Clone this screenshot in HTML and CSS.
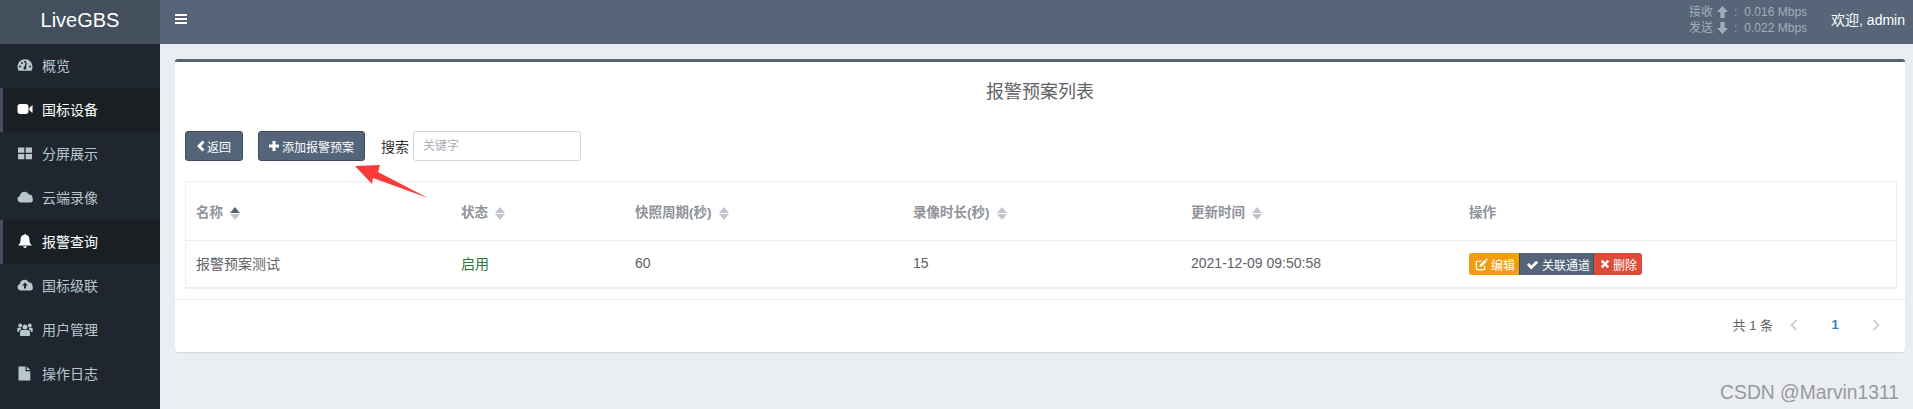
FILE: index.html
```html
<!DOCTYPE html>
<html lang="zh-CN">
<head>
<meta charset="utf-8">
<title>LiveGBS</title>
<link rel="stylesheet" href="styles.css">
</head>
<body>
<aside class="sidebar">
  <div class="logo">LiveGBS</div>
  <nav class="menu">
    <a class="item"><svg class="ico" viewBox="0 0 16 16"><path fill-rule="evenodd" d="M8 2.200C3.800 2.200.5 5.600.5 9.800c0 1.300.3 2.500.9 3.600.1.200.3.300.5.300h12.200c.2 0 .4-.1.500-.3.600-1.100.9-2.300.9-3.600 0-4.200-3.300-7.600-7.500-7.600zM3 10.500a1 1 0 1 1 0-2 1 1 0 0 1 0 2zm2-3.500a1 1 0 1 1 0-2 1 1 0 0 1 0 2zm3-1.300a1 1 0 1 1 0-2 1 1 0 0 1 0 2zm0 6.800c-.9 0-1.500-.7-1.500-1.500 0-.6.300-1.100.800-1.300l1.700-4.400 1 .3-1 4.500c.3.300.5.600.5 1 0 .8-.6 1.400-1.500 1.400zm5-2a1 1 0 1 1 0-2 1 1 0 0 1 0 2z"/></svg>概览</a>
    <a class="item active"><svg class="ico" viewBox="0 0 16 16"><path d="M.5 5.500C.5 4.100 1.600 3 3 3h6c1.400 0 2.500 1.100 2.500 2.500v5C11.500 11.900 10.400 13 9 13H3C1.600 13 .5 11.900.5 10.500zM12.300 7l2.800-2.800c.2-.2.400-.1.400.2v7.200c0 .3-.2.400-.4.200L12.300 9z"/></svg>国标设备</a>
    <a class="item"><svg class="ico" viewBox="0 0 16 16"><path d="M1 2.500h6.300v5.200H1zM8.700 2.500H15v5.200H8.700zM1 9h6.300v5.200H1zM8.700 9H15v5.200H8.700z"/></svg>分屏展示</a>
    <a class="item"><svg class="ico" viewBox="0 0 16 16"><path d="M4 13.500c-2 0-3.500-1.500-3.500-3.400 0-1.500.9-2.700 2.300-3.200C3 4.500 5 2.800 7.500 2.800c2 0 3.700 1.100 4.400 2.800.3-.1.500-.1.800-.1 1.600 0 2.800 1.400 2.800 3 0 .3 0 .5-.1.700.4.500.6 1 .6 1.500 0 1.300-1.100 2.800-2.500 2.800z"/></svg>云端录像</a>
    <a class="item active"><svg class="ico" viewBox="0 0 16 16"><path d="M8 1c.5 0 .9.400.9.800 2.300.4 3.500 2.300 3.500 4.600 0 3.300 1.100 4.500 2.600 6.100H1c1.500-1.600 2.600-2.800 2.600-6.100 0-2.300 1.200-4.200 3.500-4.600C7.100 1.400 7.500 1 8 1zM6.200 13.300h3.600C9.800 14.300 9 15 8 15s-1.800-.7-1.800-1.700z"/></svg>报警查询</a>
    <a class="item"><svg class="ico" viewBox="0 0 16 16"><path fill-rule="evenodd" d="M4 13.500c-2 0-3.500-1.500-3.500-3.400 0-1.500.9-2.700 2.300-3.200C3 4.500 5 2.800 7.500 2.800c2 0 3.700 1.100 4.400 2.800.3-.1.500-.1.800-.1 1.600 0 2.800 1.400 2.800 3 0 .3 0 .5-.1.700.4.500.6 1 .6 1.500 0 1.300-1.100 2.800-2.500 2.800zM8 5.500 5 8.500h2v3h2v-3h2z"/></svg>国标级联</a>
    <a class="item"><svg class="ico" viewBox="0 0 16 16"><path d="M8 3.500a2.500 2.500 0 1 1 0 5 2.500 2.500 0 0 1 0-5zM3.200 2.500a1.900 1.900 0 1 1 0 3.800 1.900 1.900 0 0 1 0-3.800zM12.800 2.500a1.900 1.900 0 1 1 0 3.800 1.900 1.900 0 0 1 0-3.800zM5 9h6c1.100 0 2 .9 2 2v3c0 .5-.4 1-1 1H4c-.6 0-1-.5-1-1v-3c0-1.100.9-2 2-2zM.3 7.500c0-.4.300-.7.700-.7h3c-.2.700.1 1.300.5 1.500C2.900 8.700 2 9.700 2 11H1c-.4 0-.7-.3-.7-.7zM15.700 7.500c0-.4-.3-.7-.7-.7h-3c.2.700-.1 1.300-.5 1.500 1.600.4 2.500 1.400 2.500 2.700h1c.4 0 .7-.3.7-.7z"/></svg>用户管理</a>
    <a class="item"><svg class="ico" viewBox="0 0 16 16"><path d="M1.500 1.500h7v4.700h4.800V15.500H1.500zM9.700 1.500l3.600 3.600H9.700z"/></svg>操作日志</a>
  </nav>
</aside>
<main class="main">
  <header class="topbar">
    <div class="burger"><span></span><span></span><span></span></div>
    <div class="traffic">
      <div class="traffic-row"><span>接收</span><svg class="tico" viewBox="1 .5 10 11"><path d="M6 .5 11 6H8v5.500H4V6H1z"/></svg><span class="colon">:</span><span class="rate">0.016 Mbps</span></div>
      <div class="traffic-row"><span>发送</span><svg class="tico" viewBox="1 .5 10 11"><path d="M6 11.500 1 6h3V.5h4V6h3z"/></svg><span class="colon">:</span><span class="rate">0.022 Mbps</span></div>
    </div>
    <div class="user">欢迎, admin</div>
  </header>
  <section class="content">
    <div class="box">
      <h1 class="title">报警预案列表</h1>
      <div class="toolbar">
        <button class="btn back"><svg class="bico" viewBox="1 0 9 12"><path d="M7.500 .5 9.500 2.500 6 6l3.500 3.500-2 2L2 6z"/></svg>返回</button>
        <button class="btn add"><svg class="bico plus" viewBox="1 1 10 10"><path d="M4.500 1h3v3.500H11v3H7.500V11h-3V7.500H1v-3h3.500z"/></svg>添加报警预案</button>
        <label class="search-label">搜索</label>
        <input class="search" placeholder="关键字">
      </div>
      <div class="table-wrap">
        <table class="table">
          <colgroup><col class="c1"><col class="c2"><col class="c3"><col class="c3"><col class="c3"><col></colgroup>
          <thead>
            <tr>
              <th>名称<span class="sort asc"><i class="up"></i><i class="down"></i></span></th>
              <th>状态<span class="sort"><i class="up"></i><i class="down"></i></span></th>
              <th>快照周期(秒)<span class="sort"><i class="up"></i><i class="down"></i></span></th>
              <th>录像时长(秒)<span class="sort"><i class="up"></i><i class="down"></i></span></th>
              <th>更新时间<span class="sort"><i class="up"></i><i class="down"></i></span></th>
              <th>操作</th>
            </tr>
          </thead>
          <tbody>
            <tr>
              <td>报警预案测试</td>
              <td class="on">启用</td>
              <td>60</td>
              <td>15</td>
              <td>2021-12-09 09:50:58</td>
              <td>
                <div class="group">
                  <a class="act warn"><svg class="aico" viewBox="0 0 14 14"><path fill="none" stroke="currentColor" stroke-width="1.300" d="M10.500 8v3.500a1 1 0 0 1-1 1H2.500a1 1 0 0 1-1-1v-7a1 1 0 0 1 1-1H7"/><path d="M5 7.500 10.500 2 12.500 4 7 9.500H5zM11.200 1.300l.6-.6c.3-.3.600-.3.900 0l.8.8c.3.3.3.600 0 .9l-.6.600z"/></svg>编辑</a>
                  <a class="act link"><svg class="aico" viewBox="0 0 14 14"><path d="M1 7.500 3 5.500l2.700 2.700L11 3l2 2-7.300 7.300z"/></svg>关联通道</a>
                  <a class="act del"><svg class="aico small" viewBox="0 0 12 12"><path d="M3 1l3 3 3-3 2 2-3 3 3 3-2 2-3-3-3 3-2-2 3-3-3-3z"/></svg>删除</a>
                </div>
              </td>
            </tr>
          </tbody>
        </table>
      </div>
      <div class="footer">
        <span class="total">共 1 条</span>
        <svg class="chev" viewBox="0 0 10 14"><path d="M7.500 2 2.500 7l5 5"/></svg>
        <span class="page">1</span>
        <svg class="chev" viewBox="0 0 10 14"><path d="M2.500 2l5 5-5 5"/></svg>
      </div>
    </div>
  </section>
</main>
<svg class="arrow" viewBox="0 0 80 40"><polygon points="0,1 25,0 23,7 73,33 18,13 17,19"/></svg>
<div class="mark">CSDN @Marvin1311</div>
</body>
</html>
```
FILE: styles.css
```css
* { box-sizing: border-box; }
html, body { margin: 0; height: 100%; }
body {
  display: flex;
  overflow: hidden;
  position: relative;
  background: #eaedf2;
  font-family: "Liberation Sans", "Noto Sans CJK SC", sans-serif;
  font-size: 14px;
  color: #606266;
}
.sidebar { width: 160px; flex: none; background: #1f2630; }
.logo {
  height: 44px;
  background: #434f5c;
  color: #fff;
  font-size: 20px;
  line-height: 40px;
  text-align: center;
}
.item {
  display: flex;
  align-items: center;
  height: 44px;
  padding: 0 0 2px 17px;
  color: #b8c7ce;
  font-size: 14px;
}
.item.active { background: #1a1f24; color: #fff; border-left: 3px solid #434f5c; padding-left: 14px; }
.ico { width: 16px; height: 16px; margin-right: 9px; fill: currentColor; flex: none; }
.main { flex: 1; display: flex; flex-direction: column; min-width: 0; }
.topbar {
  height: 44px;
  background: #566678;
  display: flex;
  align-items: center;
  padding: 0 8px 0 15px;
  color: #fff;
}
.burger { width: 12px; display: flex; flex-direction: column; gap: 2px; margin-right: auto; margin-top: -6px; }
.burger span { display: block; height: 2px; background: #fff; }
.traffic { font-size: 12px; color: #a3adb8; line-height: 16px; margin-right: 24px; margin-top: -5px; }
.traffic-row { display: flex; align-items: center; }
.tico { width: 11px; height: 12px; fill: currentColor; margin-left: 4px; }
.colon { margin: 0 7px 0 6px; }
.user { font-size: 14px; margin-top: -6px; }
.content { padding: 15px 8px 0 15px; }
.box {
  background: #fff;
  border-top: 3px solid #54657a;
  border-radius: 3px;
  box-shadow: 0 1px 1px rgba(0,0,0,.1);
  height: 293px;
}
.title {
  margin: 0;
  height: 69px;
  padding-top: 17px;
  text-align: center;
  font-size: 18px;
  line-height: 26px;
  font-weight: 400;
  color: #606266;
}
.toolbar { display: flex; align-items: center; height: 30px; padding-left: 10px; }
.btn {
  height: 30px;
  background: #54657a;
  border: 1px solid #3f4d5e;
  border-radius: 3px;
  color: #fff;
  font: 12px "Liberation Sans", "Noto Sans CJK SC", sans-serif;
  display: flex;
  align-items: center;
  padding: 0;
}
.back { width: 58px; padding-left: 10px; margin-right: 15px; }
.add { width: 107px; padding-left: 10px; margin-right: 16px; }
.bico { width: 9px; height: 12px; fill: #fff; margin-right: 2px; flex: none; }
.bico.plus { width: 10px; height: 10px; margin-right: 3px; }
.search-label { color: #333; width: 32px; font-size: 14px; }
.search {
  width: 168px;
  height: 30px;
  border: 1px solid #d2d6de;
  border-radius: 3px;
  padding: 0 9px;
  font: 12px "Liberation Sans", "Noto Sans CJK SC", sans-serif;
}
.search::placeholder { color: #a9adb5; }
.table-wrap { margin: 20px 8px 0 10px; border: 1px solid #ebeef5; border-bottom-width: 2px; height: 108px; }
.table { width: 100%; border-collapse: collapse; table-layout: fixed; }
.c1 { width: 265px; }
.c2 { width: 174px; }
.c3 { width: 278px; }
th, td { padding: 0 0 0 10px; text-align: left; font-size: 14px; }
th { height: 58px; color: #909399; font-weight: 700; font-size: 13.500px; border-bottom: 1px solid #ebeef5; }
td { height: 47px; color: #606266; padding-bottom: 1px; }
td.on { color: #2b7a3b; }
.sort { display: inline-block; vertical-align: middle; margin-left: 7px; width: 10px; }
.sort i { display: block; width: 0; height: 0; border: 5px solid transparent; }
.sort .up { border-top: 0; border-bottom: 6px solid #c0c4cc; margin-bottom: 1px; }
.sort .down { border-bottom: 0; border-top: 6px solid #c0c4cc; }
.sort.asc .up { border-bottom-color: #54657a; }
.group { display: flex; margin-top: 2px; }
.act {
  height: 22px;
  display: flex;
  align-items: center;
  color: #fff;
  font-size: 12px;
  padding: 0 0 0 6px;
}
.warn { background: #f39c12; width: 50px; border-radius: 3px 0 0 3px; }
.link { background: #54657a; width: 75px; border: 1px solid #3f4d5e; border-width: 0 1px; }
.del { background: #dd4b39; width: 48px; border-radius: 0 3px 3px 0; }
.aico { width: 13px; height: 13px; fill: currentColor; margin-right: 3px; flex: none; }
.aico.small { width: 10px; height: 10px; }
.footer { display: flex; align-items: center; height: 53px; margin-top: 10px; border-top: 1px solid #f0f2f5; padding: 0 24px 3px 0; justify-content: flex-end; color: #606266; font-size: 13px; }
.chev { width: 10px; height: 14px; fill: none; stroke: #c0c4cc; stroke-width: 1.500; }
.total { margin-right: 16px; }
.page { width: 72px; text-align: center; color: #3f7fb5; font-weight: 700; font-size: 13px; }
.arrow { position: absolute; left: 355px; top: 165px; width: 80px; height: 40px; fill: #fb3a3a; }
.mark {
  position: absolute;
  right: 14px;
  bottom: 5px;
  font-size: 19.300px;
  line-height: 22px;
  color: rgba(130,130,130,.8);
}
```
